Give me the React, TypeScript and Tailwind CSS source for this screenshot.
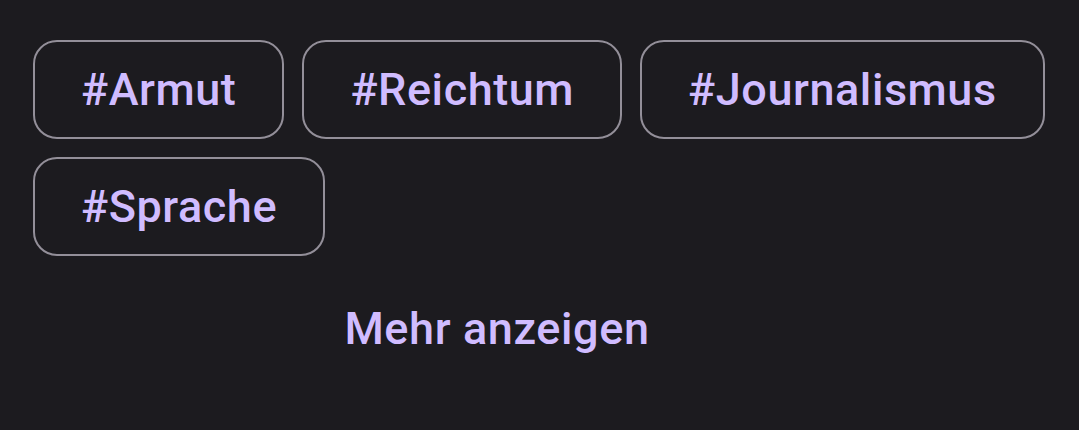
const tags = ['#Armut', '#Reichtum', '#Journalismus', '#Sprache'];

function Chip({ label }: { label: string }) {
	return (
		<div className="flex h-[99px] items-center rounded-[24px] border-2 border-[#938f99] px-[46px] text-[45px] font-medium leading-none tracking-[0.55px] text-[#d0bcff]">
			{label}
		</div>
	);
}

export default function App() {
	return (
		<div
			className="h-[430px] w-[1079px] bg-[#1c1b1f] pt-[40px]"
			style={{ fontFamily: 'Roboto, "Noto Sans", sans-serif' }}
		>
			<div className="flex flex-wrap gap-[18px] pl-[33px] pr-[20px]">
				{tags.map((t) => (
					<Chip key={t} label={t} />
				))}
			</div>
			<div className="flex w-[994px] justify-center pt-[50px]">
				<button className="text-[45px] font-medium leading-none tracking-[0.6px] text-[#d0bcff]">
					Mehr anzeigen
				</button>
			</div>
		</div>
	);
}
